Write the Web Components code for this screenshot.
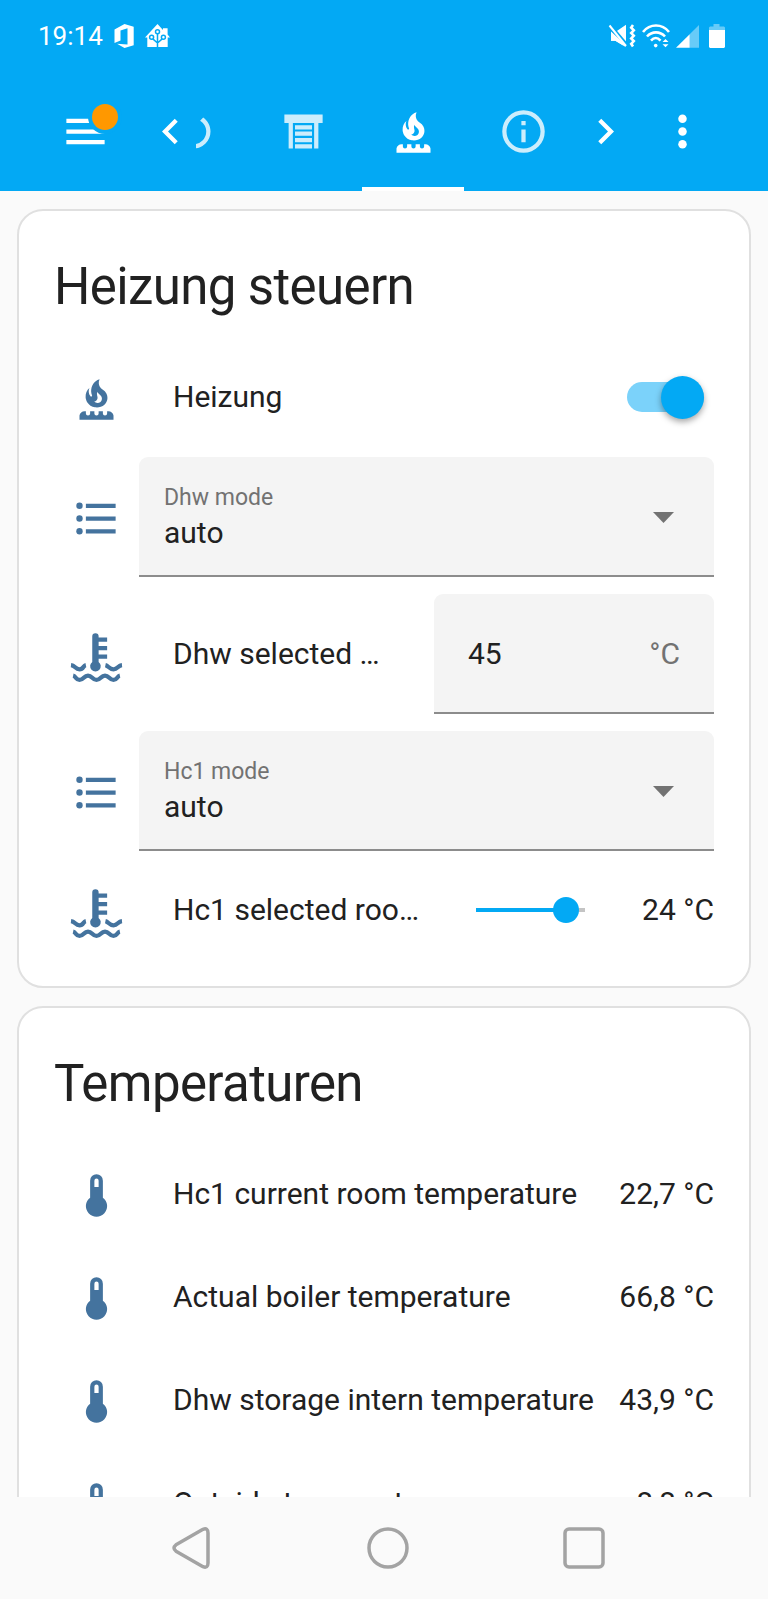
<!DOCTYPE html>
<html lang="de">
<head>
<meta charset="utf-8">
<meta name="viewport" content="width=device-width, initial-scale=1">
<title>Heizung</title>
<style>
  html, body { height: 100%; }
  body {
    margin: 0;
    font-family: Roboto, "Noto Sans", sans-serif;
    font-size: 30px;
    line-height: 42px;
    color: #212121;
    background: #fafafa;
    --primary: #03a9f4;
    --icon: #44739e;
    --secondary: #727272;
    --field: #f4f4f4;
    --line: #e0e0e0;
  }
</style>
</head>
<body>
<phone-screen>
  <status-bar slot="top" time="19:14"></status-bar>
  <app-header slot="top"></app-header>
  <entity-card heading="Heizung steuern">
    <toggle-row icon="burner" label="Heizung"></toggle-row>
    <select-row icon="list" label="Dhw mode" value="auto"></select-row>
    <number-row icon="coolant" label="Dhw selected temperature" value="45" unit="°C"></number-row>
    <select-row icon="list" label="Hc1 mode" value="auto"></select-row>
    <slider-row icon="coolant" label="Hc1 selected room temperature" value="24" min="10" max="25" unit="°C"></slider-row>
  </entity-card>
  <entity-card heading="Temperaturen">
    <sensor-row icon="thermometer" label="Hc1 current room temperature" value="22,7 °C"></sensor-row>
    <sensor-row icon="thermometer" label="Actual boiler temperature" value="66,8 °C"></sensor-row>
    <sensor-row icon="thermometer" label="Dhw storage intern temperature" value="43,9 °C"></sensor-row>
    <sensor-row icon="thermometer" label="Outside temperature" value="8,8 °C"></sensor-row>
  </entity-card>
  <system-nav slot="bottom"></system-nav>
</phone-screen>

<script>
const ICONS = {
  menu: '<path d="M3 6H21V8H3V6M3 11H21V13H3V11M3 16H21V18H3V16Z"/>',
  left: '<path d="M15.41 16.58L10.83 12L15.41 7.41L14 6L8 12L14 18L15.41 16.58Z"/>',
  right: '<path d="M8.59 16.58L13.17 12L8.59 7.41L10 6L16 12L10 18L8.59 16.58Z"/>',
  more: '<circle cx="12" cy="6" r="2"/><circle cx="12" cy="12" r="2"/><circle cx="12" cy="18" r="2"/>',
  power: '<path d="M16.56 5.44L15.11 6.89C16.84 7.94 18 9.83 18 12A6 6 0 0 1 12 18A6 6 0 0 1 6 12C6 9.83 7.16 7.94 8.88 6.88L7.44 5.44C5.36 6.88 4 9.28 4 12A8 8 0 0 0 12 20A8 8 0 0 0 20 12C20 9.28 18.64 6.88 16.56 5.44M13 3H11V13H13"/>',
  shutter: '<path d="M3 4H21V8H19V20H17V8H7V20H5V8H3V4M8 9H16V11H8V9M8 12H16V14H8V12M8 15H16V17H8V15M8 18H16V20H8V18Z"/>',
  info: '<path d="M11 9H13V7H11M12 20C7.59 20 4 16.41 4 12S7.59 4 12 4 20 7.59 20 12 16.41 20 12 20M12 2A10 10 0 0 0 2 12A10 10 0 0 0 12 22A10 10 0 0 0 22 12A10 10 0 0 0 12 2M11 17H13V11H11V17Z"/>',
  burner: '<path transform="translate(3.2 .75) scale(.735)" d="M17.66 11.2C17.43 10.9 17.15 10.64 16.89 10.38C16.22 9.78 15.46 9.35 14.82 8.72C13.33 7.26 13 4.85 13.95 3C13 3.23 12.17 3.75 11.46 4.32C8.87 6.4 7.85 10.07 9.07 13.22C9.11 13.32 9.15 13.42 9.15 13.55C9.15 13.77 9 13.97 8.8 14.05C8.57 14.15 8.33 14.09 8.14 13.93C8.08 13.88 8.04 13.83 8 13.76C6.87 12.33 6.69 10.28 7.45 8.64C5.78 10 4.87 12.3 5 14.47C5.06 14.97 5.12 15.47 5.29 15.97C5.43 16.57 5.7 17.17 6 17.7C7.08 19.43 8.95 20.67 10.96 20.92C13.1 21.19 15.39 20.8 17.03 19.32C18.86 17.66 19.5 15 18.56 12.72L18.43 12.46C18.22 12 17.66 11.2 17.66 11.2M14.5 17.5C14.22 17.74 13.76 18 13.4 18.1C12.28 18.5 11.16 17.94 10.5 17.28C11.69 17 12.4 16.12 12.61 15.23C12.78 14.43 12.46 13.77 12.33 13C12.21 12.26 12.23 11.63 12.5 10.94C12.69 11.32 12.89 11.7 13.13 12C13.9 13 15.11 13.44 15.37 14.8C15.41 14.94 15.43 15.08 15.43 15.23C15.46 16.05 15.1 16.95 14.5 17.5Z"/><path d="M4 22V20C4.2 18.9 5.2 18 6.4 18H7V19A1 1 0 0 0 9 19V18H11V19A1 1 0 0 0 13 19V18H15V19A1 1 0 0 0 17 19V18H17.6C18.8 18 19.8 18.9 20 20V22Z"/>',
  list: '<path d="M7 5H21V7H7V5M7 11H21V13H7V11M7 17H21V19H7V17Z"/><circle cx="4" cy="6" r="1.5"/><circle cx="4" cy="12" r="1.5"/><circle cx="4" cy="18" r="1.5"/>',
  coolant: '<path d="M10 3A1.5 1.5 0 0 1 13 3V3.5H17V5.5H13V7.5H17V9.5H13V11.5H17V13.5H13V15A2.5 2.5 0 1 1 10 15Z"/><path fill="none" stroke="currentColor" stroke-width="2" d="M0 16.5C2 16.7 2 18.5 4 18.5S5.6 16.8 7 16.5M16.2 16.5C17.6 16.8 18 18.5 20 18.5S22 16.7 24 16.5M1 21.5C2.4 21.8 2.2 23.5 4 23.5C6 23.5 6 21.5 8 21.5S10 23.5 12 23.5 14 21.5 16 21.5 18 23.5 20 23.5C21.8 23.5 21.6 21.8 23 21.5"/>',
  thermometer: '<path d="M15 13V5A3 3 0 0 0 9 5V13A5 5 0 1 0 15 13M12 4A1 1 0 0 1 13 5V8H11V5A1 1 0 0 1 12 4Z"/>'
};

class Base extends HTMLElement {
  connectedCallback() {
    if (this.shadowRoot) return;
    const root = this.attachShadow({ mode: 'open' });
    root.innerHTML = '<style>*{box-sizing:border-box}' + this.css() + '</style>' + this.html();
  }
  attr(name) { return this.getAttribute(name) || ''; }
}

customElements.define('app-icon', class extends Base {
  css() { return ':host{display:block;width:51px;height:51px;flex:none}svg{display:block;width:100%;height:100%;fill:currentColor;overflow:visible}'; }
  html() { return `<svg viewBox="0 0 24 24" aria-hidden="true">${ICONS[this.attr('name')]}</svg>`; }
});

customElements.define('phone-screen', class extends Base {
  css() { return `
    :host{display:flex;flex-direction:column;height:100vh}
    main{flex:1;min-height:0;overflow-y:auto;scrollbar-width:none;display:flex;flex-direction:column;gap:18px;padding:18px 17px}`; }
  html() { return '<slot name="top"></slot><main><slot></slot></main><slot name="bottom"></slot>'; }
});

customElements.define('status-bar', class extends Base {
  css() { return `
    :host{display:flex;flex:none;align-items:center;height:72px;padding:0 43px 0 38px;background:var(--primary);color:#fff;font-size:26px}
    div{display:flex;align-items:center}
    .apps{gap:11px;flex:1}
    .state{gap:6px}
    svg{display:block;fill:currentColor}
    .battery{margin-left:4px}`; }
  html() { return `
    <div class="apps"><time>${this.attr('time')}</time>
      <svg width="20" height="24" viewBox="0 0 20 24"><path d="M.5 5.5L10.5 0L19.7 2.7V21.3L10.5 24L3 19.7L13.5 20.5V4.2L6.5 6.5V16.5L.5 19Z"/></svg>
      <svg width="25" height="24" viewBox="0 0 25 24"><path d="M12.5 0L18 6V4.3H22.6V10.6L25 13.5H22.7V23H2.3V13.5H0Z"/><g fill="none" stroke="#03a9f4" stroke-width="1.5"><path d="M12.5 23V9.5M12.5 19L7.5 14.6M12.5 19L17.5 14.6"/><g fill="#fff"><circle cx="12.5" cy="7.7" r="2"/><circle cx="6.6" cy="13.2" r="2"/><circle cx="18.4" cy="13.2" r="2"/></g></g></svg>
    </div>
    <div class="state">
      <svg width="28" height="24" viewBox="0 0 28 24"><path d="M8.5 7.3L18 .7V18.7ZM3 8V16.7H7.3L17.5 23Z"/><path d="M1.5 1.5L18.5 21.5" stroke="#03a9f4" stroke-width="4.5"/><path d="M1.5 1.5L18 22" stroke="currentColor" stroke-width="2"/><path d="M3 7.5V16.7H7.3L17.5 22.8V20.8Z"/><path d="M25 1L23.2 3.6L25.8 6.3L23.2 9L25.8 11.7L23.2 14.4L25.8 17.1L23.2 19.8L25 22.5" fill="none" stroke="currentColor" stroke-width="2.6"/></svg>
      <svg width="28" height="24" viewBox="0 0 28 24"><path d="M1 8C8 -.6 20 -.6 27 8M5 12.5C10 7 18 7 23 12.5M9 16.6C12 13.2 15.5 13.2 18.5 16.6" fill="none" stroke="currentColor" stroke-width="2.6"/><circle cx="13.7" cy="21.6" r="1.8"/><path d="M23.5 15L26.5 18H20.5ZM20.5 20.3H26.5L23.5 23.3Z"/></svg>
      <svg width="23" height="24" viewBox="0 0 23 24"><path opacity=".4" d="M13.7 10.3L23 1V23.7H13.7Z"/><path d="M0 23.7L13.7 10.3V23.7Z"/></svg>
      <svg class="battery" width="16" height="24" viewBox="0 0 16 24"><path opacity=".4" d="M0 6V3.5L1 2.6H4.5V0H10.5V2.6H15L16 3.5V6Z"/><path d="M0 6H16V23L15 24H1L0 23Z"/></svg>
    </div>`; }
});

customElements.define('app-header', class extends Base {
  css() { return `
    :host{display:flex;flex:none;height:119px;padding:0 35px 0 34px;background:var(--primary);color:#fff}
    button{display:flex;align-items:center;justify-content:center;flex:none;padding:0;border:0;background:none;color:inherit}
    .action{width:102px}
    .menu{position:relative;margin-right:9px}
    .badge{position:absolute;top:32px;right:18px;width:26px;height:26px;border-radius:50%;background:#ff9800;box-shadow:0 0 0 4px var(--primary)}
    nav{display:flex;flex:1;min-width:0;justify-content:flex-end;overflow:hidden;padding-right:2px}
    .tab{width:110px;padding:4px 0 0;flex-direction:column}
    .tab app-icon{margin:auto;opacity:.8}
    .tab::after{content:"";width:102px;height:4px}
    .tab[aria-selected=true]::after{background:#fff}
    .tab[aria-selected=true] app-icon{opacity:1}`; }
  html() { return `
    <button class="action menu" aria-label="Menü"><app-icon name="menu"></app-icon><span class="badge"></span></button>
    <button aria-label="Zurück"><app-icon name="left"></app-icon></button>
    <nav role="tablist">
      <button class="tab" role="tab" aria-label="Strom"><app-icon name="power"></app-icon></button>
      <button class="tab" role="tab" aria-label="Rollladen"><app-icon name="shutter"></app-icon></button>
      <button class="tab" role="tab" aria-label="Heizung" aria-selected="true"><app-icon name="burner"></app-icon></button>
      <button class="tab" role="tab" aria-label="Info"><app-icon name="info"></app-icon></button>
    </nav>
    <button aria-label="Weiter"><app-icon name="right"></app-icon></button>
    <button class="action" aria-label="Mehr"><app-icon name="more"></app-icon></button>`; }
});

customElements.define('entity-card', class extends Base {
  css() { return `
    :host{display:block;flex:none;background:#fff;border:2px solid var(--line);border-radius:26px;padding:42px 35px 34px;box-sizing:border-box}
    h1{margin:0 0 33px;font-size:51px;line-height:68px;font-weight:400;letter-spacing:-0.012em}
    div{display:flex;flex-direction:column;gap:17px}`; }
  html() { return `<h1>${this.attr('heading')}</h1><div><slot></slot></div>`; }
});

const ROW = `
  :host{display:flex;align-items:center;min-height:86px}
  .badge{width:85px;flex:none;display:flex;justify-content:center;padding-top:3px;color:var(--icon)}
  .name{flex:1;min-width:0;margin:0 51px 0 34px;overflow:hidden;text-overflow:ellipsis;white-space:nowrap}
  .value{white-space:nowrap;text-align:right}
  .field{background:var(--field);border-bottom:2px solid #8c8c8c;border-radius:9px 9px 0 0;height:120px}
  input,select{font:inherit;color:inherit;margin:0;outline:0}`;

class Row extends Base {
  badge() { return `<span class="badge"><app-icon name="${this.attr('icon')}"></app-icon></span>`; }
}

customElements.define('toggle-row', class extends Row {
  css() { return ROW + `
    input{appearance:none;display:flex;align-items:center;width:77px;height:30px;margin-right:10px;border-radius:15px;background:#bdbdbd}
    input::before{content:"";width:43px;height:43px;flex:none;border-radius:50%;background:#fff;box-shadow:0 3px 6px rgba(0,0,0,.35)}
    input:checked{justify-content:flex-end;background:#7bd2fa}
    input:checked::before{background:var(--primary)}`; }
  html() { return `${this.badge()}<label class="name" for="c">${this.attr('label')}</label><input id="c" type="checkbox" role="switch" checked>`; }
});

customElements.define('select-row', class extends Row {
  css() { return ROW + `
    .field{flex:1;display:grid}
    .field>*{grid-area:1/1}
    label{padding:27px 25px 0;font-size:23px;line-height:28px;color:var(--secondary);align-self:start}
    select{appearance:none;border:0;background:none;width:100%;height:100%;padding:55px 80px 21px 25px;line-height:42px}
    svg{place-self:center end;margin:3px 40px 0 0;fill:var(--secondary);pointer-events:none}`; }
  html() { return `${this.badge()}<div class="field"><label for="s">${this.attr('label')}</label>
    <select id="s"><option>${this.attr('value')}</option></select>
    <svg width="21" height="11" viewBox="0 0 21 11"><path d="M0 0H21L10.5 11Z"/></svg></div>`; }
});

customElements.define('number-row', class extends Row {
  css() { return ROW + `
    .field{width:280px;display:flex;align-items:center;padding:2px 34px 0}
    input{flex:1;min-width:0;border:0;padding:0;background:none}
    .unit{color:var(--secondary)}`; }
  html() { return `${this.badge()}<label class="name" for="n">${this.attr('label')}</label>
    <div class="field"><input id="n" type="text" inputmode="decimal" value="${this.attr('value')}"><span class="unit">${this.attr('unit')}</span></div>`; }
});

customElements.define('slider-row', class extends Row {
  css() { return ROW + `
    :host{min-height:84px}
    input{appearance:none;width:109px;height:26px;background:linear-gradient(90deg,var(--primary) 83%,#c4c4c4 83%) center/100% 4px no-repeat}
    input::-webkit-slider-thumb{appearance:none;width:26px;height:26px;border-radius:50%;background:var(--primary)}
    .value{width:129px}`; }
  html() { return `${this.badge()}<label class="name" for="r">${this.attr('label')}</label>
    <input id="r" type="range" min="${this.attr('min')}" max="${this.attr('max')}" value="${this.attr('value')}"><span class="value">${this.attr('value')} ${this.attr('unit')}</span>`; }
});

customElements.define('sensor-row', class extends Row {
  css() { return ROW + '.name{margin-right:17px}'; }
  html() { return `${this.badge()}<span class="name">${this.attr('label')}</span><span class="value">${this.attr('value')}</span>`; }
});

customElements.define('system-nav', class extends Base {
  css() { return `
    :host{display:flex;flex:none;justify-content:center;height:102px;padding-left:8px;background:#fafafa}
    button{display:flex;align-items:center;justify-content:center;width:196px;border:0;padding:0;background:none}
    svg{fill:none;stroke:#a3a3a3;stroke-width:3.5;stroke-linejoin:round}`; }
  html() { return `
    <button aria-label="Zurück"><svg width="44" height="44" viewBox="0 0 44 44"><path d="M33 3.3L6 18.8Q2 22 6 25.2L33 40.7Q38 42.5 38 37V7Q38 1.5 33 3.3Z"/></svg></button>
    <button aria-label="Startseite"><svg width="44" height="44" viewBox="0 0 44 44"><circle cx="22" cy="22" r="19"/></svg></button>
    <button aria-label="Letzte Apps"><svg width="44" height="44" viewBox="0 0 44 44"><rect x="3" y="3" width="38" height="38" rx="4"/></svg></button>`; }
});
</script>
</body>
</html>
